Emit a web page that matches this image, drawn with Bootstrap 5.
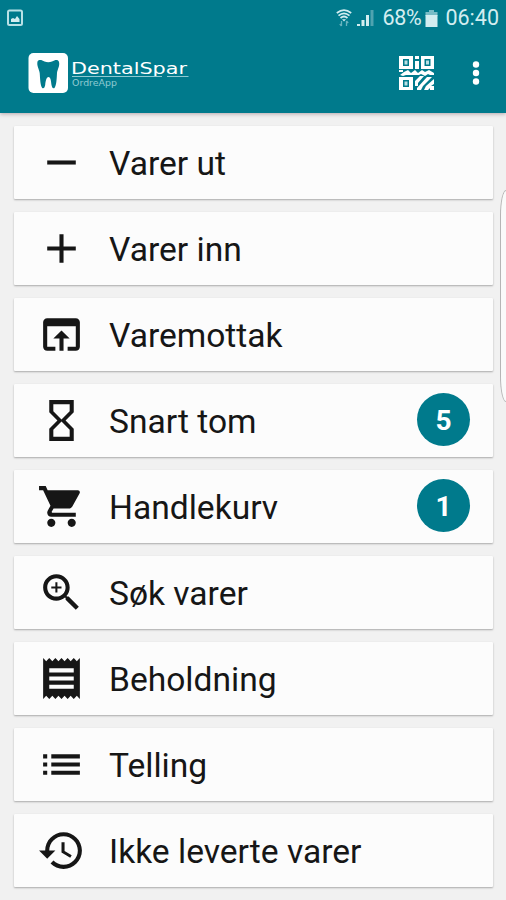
<!DOCTYPE html>
<html lang="no">
<head>
<meta charset="utf-8">
<meta name="viewport" content="width=device-width, initial-scale=1">
<title>DentalSpar OrdreApp</title>
<link href="https://cdn.jsdelivr.net/npm/bootstrap@5.3.0/dist/css/bootstrap.min.css" rel="stylesheet">
<style>
body{background:#f1f1f1;font-family:Roboto,"Noto Sans",sans-serif;height:900px;color:#161616}
.app-top{background:#007a8c;height:113px;box-shadow:0 1px 4px rgba(70,30,40,.35)}
.status{height:36px;color:#d3edf0;font-size:21.5px;line-height:36px;padding:0 7px 0 6px}
.toolbar{height:77px;padding:0 22px 3px 28px}
.battery-text{margin-left:7px;letter-spacing:-.3px}
.clock{margin-left:7px}
.more{margin-left:33px}
.menu{padding:13px 13px 0 14px;gap:13px}
.item{height:73px;background:#fcfcfc;border-radius:1px;box-shadow:0 1px 2px rgba(0,0,0,.3);padding:0 23px;font-size:33.6px;line-height:40px;color:#161616}
.item:hover{color:#161616}
.item svg{width:49px;height:49px;margin-right:22px;fill:#161616}
.item .label{padding:2px 0 0 1px}
.count{width:53px;height:53px;background:#007a8c;font-size:28px;line-height:55px;font-weight:700;margin-top:-2px}
.edge{right:0;top:190px;width:6px;height:212px;border:1px solid #b5b5b5;border-right:0;border-radius:8px 0 0 8px/34px 0 0 34px;background:#fafafa}
</style>
<script src="https://cdn.jsdelivr.net/npm/bootstrap@5.3.0/dist/js/bootstrap.bundle.min.js"></script>
</head>
<body class="position-relative overflow-hidden">
<header class="app-top">
  <div class="status d-flex align-items-center">
    <svg width="18" height="18" viewBox="0 0 18 18"><rect x="2" y="1.5" width="14" height="14.5" rx="1.5" fill="none" stroke="#b8e1e6" stroke-width="2"/><path d="M5 13V10l2-1 2 1 2-3 2.500 3v3z" fill="#d3edf0"/></svg>
    <svg class="ms-auto" width="16" height="20" viewBox="0 0 16 20" fill="none" stroke="#d3edf0"><path d="M.8 5Q8-.8 15.200 5M2.500 7.600Q8 3 13.500 7.600M4.500 10Q8 7 11.500 10" stroke-width="1.700"/><path d="M6 11.200h4L8 13.500z" fill="#d3edf0" stroke="none"/><path d="M5.500 13v5M3.800 16l1.700 2M10.500 18v-5M12.200 15l-1.700-2" stroke="#68b3be" stroke-width="1.300"/></svg>
    <svg class="ms-1" width="19" height="20" viewBox="0 0 19 20"><path fill="#d3edf0" d="M1 16h3v2H1zM5.500 12h3v6h-3zM10 7h3v11h-3z"/><path fill="#4fa3b0" d="M14.500 2h3v16h-3z"/></svg>
    <span class="battery-text">68%</span>
    <svg class="ms-1" width="13" height="19" viewBox="0 0 13 19"><path fill="#78bcc6" d="M4 1h5v2h3.500v4H.5V3H4z"/><path fill="#d3edf0" d="M.5 6h12v12H.5z"/></svg>
    <span class="clock">06:40</span>
  </div>
  <div class="toolbar d-flex align-items-center">
    <svg width="162" height="42" viewBox="0 0 162 42" fill="#fff">
      <rect x=".5" y="1" width="39.500" height="40" rx="5"/>
      <path fill="#007a8c" d="M9.500 9.500C11 7 14 8 16.500 9.500c2.500 1 5 1 7.500 0C27 8 30 7 31 10c1 4-1.500 7-2 11-.3 6-.5 12-2.500 15-1.500 1-2.500-.5-3-3-.5-4-.8-8-3-8s-2.800 4-3.300 8c-.5 2.500-1.500 4-3 3-2-3-2-9-2.500-15-.5-4-3.200-7-2.200-11.500z"/>
      <text x="43" y="22" font-family="DejaVu Sans" font-size="16.500" textLength="116" lengthAdjust="spacingAndGlyphs">DentalSpar</text>
      <path d="M44 24.500h90M139 24.500h21.500" stroke="#8fcad2" stroke-width="1"/>
      <text x="44" y="34" font-family="DejaVu Sans" font-size="9" fill="#8fcad2" textLength="45" lengthAdjust="spacingAndGlyphs">OrdreApp</text>
    </svg>
    <svg class="ms-auto" width="36" height="36" viewBox="0 0 36 36">
      <path fill="#fff" fill-rule="evenodd" d="M0 1h14v13H0zM4 4v7h6V4zM22 1h13v13H22zM25.500 4v7h6V4zM0 22h14v13H0zM4 25v7h6v-7z"/>
      <path fill="#b9dfe4" d="M5.500 5.500h3v4h-3zM27 5.500h3v4h-3zM5.500 26.500h3v4h-3z"/>
      <path fill="#fff" d="M16 1h4v3h-4zM16 6h4v8h-4zM0 15h4v2H0zM5 17l4-2 3 3 4-3 3 3 4-3 3 2 4-2 5 3v2h-4l-2-1-3 2-4-2-2 1H7l-3 1-3-1zM16 26l5-5h4l-6 7v3h-3zM18 35v-2l10-11h5l-9 9-2 4zM25 35l2-4 8-7v5l-3 2h3v4h-4v-2l-2 2z"/>
    </svg>
    <svg class="more" width="16" height="28" viewBox="0 0 16 28" fill="#fff"><circle cx="8" cy="5.500" r="3.200"/><circle cx="8" cy="14" r="3.200"/><circle cx="8" cy="22.500" r="3.200"/></svg>
  </div>
</header>
<main class="menu d-flex flex-column">
  <a href="#" class="item d-flex align-items-center text-decoration-none"><svg viewBox="0 0 24 24"><path d="M19 13H5v-2h14z"/></svg><span class="label">Varer ut</span></a>
  <a href="#" class="item d-flex align-items-center text-decoration-none"><svg viewBox="0 0 24 24"><path d="M19 13h-6v6h-2v-6H5v-2h6V5h2v6h6z"/></svg><span class="label">Varer inn</span></a>
  <a href="#" class="item d-flex align-items-center text-decoration-none"><svg viewBox="0 0 24 24"><path d="M19 4H5c-1.110 0-2 .9-2 2v12c0 1.100.89 2 2 2h4v-2H5V8h14v10h-4v2h4c1.100 0 2-.9 2-2V6c0-1.100-.89-2-2-2zm-7 6l-4 4h3v6h2v-6h3l-4-4z"/></svg><span class="label">Varemottak</span></a>
  <a href="#" class="item d-flex align-items-center text-decoration-none"><svg viewBox="0 0 24 24"><path d="M6 2v6h.01L6 8.010 10 12l-4 4 .01.01H6V22h12v-5.990h-.01L18 16l-4-4 4-3.990-.01-.01H18V2H6zm10 14.500V20H8v-3.500l4-4 4 4zm-4-5l-4-4V4h8v3.500l-4 4z"/></svg><span class="label">Snart tom</span><span class="count rounded-circle text-white text-center ms-auto">5</span></a>
  <a href="#" class="item d-flex align-items-center text-decoration-none"><svg viewBox="0 0 24 24"><path d="M7 18c-1.100 0-1.990.9-1.990 2S5.900 22 7 22s2-.9 2-2-.9-2-2-2zM1 2v2h2l3.600 7.590-1.350 2.450c-.16.28-.25.61-.25.96 0 1.100.9 2 2 2h12v-2H7.420c-.14 0-.25-.11-.25-.25l.03-.12.900-1.630h7.450c.75 0 1.410-.41 1.750-1.030l3.580-6.490c.08-.14.12-.31.12-.48 0-.55-.45-1-1-1H5.210l-.94-2H1zm16 16c-1.100 0-1.990.9-1.990 2s.89 2 1.990 2 2-.9 2-2-.9-2-2-2z"/></svg><span class="label">Handlekurv</span><span class="count rounded-circle text-white text-center ms-auto">1</span></a>
  <a href="#" class="item d-flex align-items-center text-decoration-none"><svg viewBox="0 0 24 24"><path d="M15.500 14h-.79l-.28-.27C15.410 12.590 16 11.110 16 9.500 16 5.910 13.090 3 9.500 3S3 5.910 3 9.500 5.910 16 9.500 16c1.610 0 3.090-.59 4.230-1.570l.27.28v.79l5 4.990L20.490 19l-4.990-5zm-6 0C7.010 14 5 11.990 5 9.500S7.010 5 9.500 5 14 7.010 14 9.500 11.990 14 9.500 14zm2.500-4h-2v2H9v-2H7V9h2V7h1v2h2v1z"/></svg><span class="label">Søk varer</span></a>
  <a href="#" class="item d-flex align-items-center text-decoration-none"><svg viewBox="0 0 24 24"><path d="M18 17H6v-2h12v2zm0-4H6v-2h12v2zm0-4H6V7h12v2zM3 22l1.500-1.500L6 22l1.500-1.500L9 22l1.500-1.500L12 22l1.500-1.500L15 22l1.500-1.500L18 22l1.500-1.500L21 22V2l-1.500 1.500L18 2l-1.500 1.500L15 2l-1.500 1.500L12 2l-1.500 1.500L9 2 7.500 3.500 6 2 4.500 3.500 3 2v20z"/></svg><span class="label">Beholdning</span></a>
  <a href="#" class="item d-flex align-items-center text-decoration-none"><svg viewBox="0 0 24 24"><path d="M3 13h2v-2H3v2zm0 4h2v-2H3v2zm0-8h2V7H3v2zm4 4h14v-2H7v2zm0 4h14v-2H7v2zM7 7v2h14V7H7z"/></svg><span class="label">Telling</span></a>
  <a href="#" class="item d-flex align-items-center text-decoration-none"><svg viewBox="0 0 24 24"><path d="M13 3c-4.970 0-9 4.030-9 9H1l3.890 3.890.07.14L9 12H6c0-3.870 3.130-7 7-7s7 3.130 7 7-3.130 7-7 7c-1.930 0-3.680-.79-4.940-2.060l-1.420 1.420C8.270 19.990 10.510 21 13 21c4.970 0 9-4.030 9-9s-4.030-9-9-9zm-1 5v5l4.280 2.540.72-1.210-3.500-2.080V8H12z"/></svg><span class="label">Ikke leverte varer</span></a>
</main>
<div class="edge position-absolute"></div>
</body>
</html>
